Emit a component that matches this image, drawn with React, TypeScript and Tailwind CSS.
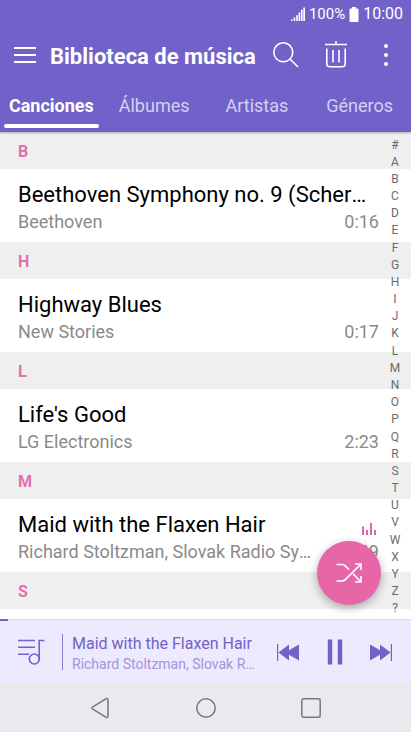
import type { ReactNode } from "react";

type Song = { letter: string; title: string; artist: string; time: string; playing?: boolean };

const songs: Song[] = [
  { letter: "B", title: "Beethoven Symphony no. 9 (Scherzo)", artist: "Beethoven", time: "0:16" },
  { letter: "H", title: "Highway Blues", artist: "New Stories", time: "0:17" },
  { letter: "L", title: "Life's Good", artist: "LG Electronics", time: "2:23" },
  {
    letter: "M",
    title: "Maid with the Flaxen Hair",
    artist: "Richard Stoltzman, Slovak Radio Symphony",
    time: "2:49",
    playing: true,
  },
];

const tabs = ["Canciones", "Álbumes", "Artistas", "Géneros"];
const index = "#ABCDEFGHIJKLMNOPQRSTUVWXYZ?".split("");

function IconButton({ label, className = "", children }: { label: string; className?: string; children: ReactNode }) {
  return (
    <button type="button" aria-label={label} className={`flex shrink-0 items-center justify-center ${className}`}>
      {children}
    </button>
  );
}

function StatusBar() {
  return (
    <div className="flex h-7 items-center justify-end pr-2 text-white">
      <svg width="14" height="14" viewBox="0 0 14 14" fill="currentColor" aria-hidden="true">
        <path d="M0 14v-1.5h1.5V14zM2.6 14v-3.5h1.7V14zM5.2 14V8.2h1.6V14zM7.6 14V5.4h1.6V14zM10 14V2.8h1.6V14zM12.3 14V.4H14V14z" />
      </svg>
      <span className="ml-1 text-[15px] leading-7">100%</span>
      <svg className="ml-1" width="10" height="15" viewBox="0 0 10 15" fill="currentColor" aria-hidden="true">
        <path d="M3 0h4v1.5h1.5q1 0 1 1V14q0 1-1 1h-7q-1 0-1-1V2.5q0-1 1-1H3z" />
      </svg>
      <span className="ml-1 text-base leading-7">10:00</span>
    </div>
  );
}

function Header() {
  return (
    <header className="relative z-10 shrink-0 bg-[#7062c8] shadow-[0_1px_2px_rgba(0,0,0,0.3)]">
      <StatusBar />
      <div className="flex h-14 items-center pl-1 text-white">
        <IconButton label="Menú" className="h-12 w-[42px] pb-0.5">
          <svg width="22" height="16" viewBox="0 0 22 16" stroke="currentColor" strokeWidth="2" aria-hidden="true">
            <path d="M0 1h22M0 8h22M0 15h22" />
          </svg>
        </IconButton>
        <h1 className="ml-1 flex-1 whitespace-nowrap text-[22px] font-bold">Biblioteca de música</h1>
        <IconButton label="Buscar" className="size-[50px] pb-0.5">
          <svg width="26" height="26" viewBox="0 0 26 26" fill="none" stroke="currentColor" strokeWidth="1.6" aria-hidden="true">
            <circle cx="10.3" cy="10.3" r="9.5" />
            <path d="M17 17l8 8" />
          </svg>
        </IconButton>
        <IconButton label="Eliminar" className="size-[50px] pb-0.5">
          <svg width="22" height="28" viewBox="0 0 22 28" fill="none" stroke="currentColor" strokeWidth="1.6" aria-hidden="true">
            <path d="M0 3.5h22M11 0v3.5M1.8 7.5v15.2q0 3 3 3h12.4q3 0 3-3V7.5M8 9v12.5M14 9v12.5" />
          </svg>
        </IconButton>
        <IconButton label="Más opciones" className="size-[50px] pb-0.5">
          <svg width="4" height="22" viewBox="0 0 4 22" fill="currentColor" aria-hidden="true">
            <circle cx="2" cy="2" r="2" />
            <circle cx="2" cy="11" r="2" />
            <circle cx="2" cy="20" r="2" />
          </svg>
        </IconButton>
      </div>
      <nav className="grid h-12 grid-cols-4">
        {tabs.map((tab, i) => (
          <a
            key={tab}
            href={`#${tab}`}
            className={`relative flex justify-center pt-2 text-lg leading-7 ${
              i === 0 ? "font-bold text-white" : "text-[#d6cff6]"
            }`}
          >
            {tab}
            {i === 0 && <span className="absolute inset-x-1 bottom-1 h-1 rounded-full bg-white" />}
          </a>
        ))}
      </nav>
    </header>
  );
}

function SectionLabel({ letter }: { letter: string }) {
  return (
    <h2 className="h-[37px] bg-[#efefef] pl-[18px] pt-px text-base font-bold leading-[37px] text-[#e070ae]">{letter}</h2>
  );
}

function SongRow({ song }: { song: Song }) {
  return (
    <div className="h-[73px] bg-white pl-[18px] pr-8 pt-3">
      <div className="mr-3 truncate text-[22px] leading-7 text-black">{song.title}</div>
      <div className="relative flex justify-between gap-7 text-lg leading-[26px] text-[#8a8a8a]">
        <span className="truncate">{song.artist}</span>
        <span>{song.time}</span>
        {song.playing && (
          <svg className="absolute -top-4 right-0.5" width="16" height="12" viewBox="0 0 16 12" fill="#e266aa" aria-hidden="true">
            <path d="M1 3.5h2V12H1zM5 7h2v5H5zM9 0h2v12H9zM13 7h2v5h-2z" />
          </svg>
        )}
      </div>
    </div>
  );
}

function Player() {
  return (
    <section className="relative z-10 flex h-[65px] shrink-0 items-center border-t border-[#dcd8f4] bg-[#ede9fe] text-[#7062c8]">
      <span className="absolute -top-px left-0 h-0.5 w-2 bg-[#7062c8]" />
      <IconButton label="Lista de reproducción" className="h-16 w-[62px]">
        <svg width="28" height="26" viewBox="0 0 28 26" fill="none" stroke="currentColor" strokeWidth="1.6" aria-hidden="true">
          <path d="M1 1.5h17M1 8.3h17M1 15.2h11M27.5 1.5h-5.3v19" />
          <circle cx="17.3" cy="20" r="5" />
        </svg>
      </IconButton>
      <span className="h-9 w-px bg-[#8b80cf]" />
      <div className="ml-[9px] min-w-0 flex-1 pt-1">
        <div className="truncate text-base leading-5">Maid with the Flaxen Hair</div>
        <div className="truncate text-sm leading-5 text-[#a195dc]">Richard Stoltzman, Slovak Radio Symphony</div>
      </div>
      <IconButton label="Anterior" className="ml-1 h-16 w-[54px]">
        <svg width="22" height="17" viewBox="0 0 22 17" fill="currentColor" aria-hidden="true">
          <path d="M0 0h1.2v17H0zM1.5 8.5L12 .5v5.7L22 .5v16l-10-5.7v5.7z" />
        </svg>
      </IconButton>
      <IconButton label="Pausa" className="h-16 w-10">
        <svg width="16" height="26" viewBox="0 0 16 26" fill="currentColor" aria-hidden="true">
          <path d="M.8.5h4.4v25H.8zM10.8.5h4.4v25h-4.4z" />
        </svg>
      </IconButton>
      <IconButton label="Siguiente" className="mr-1 h-16 w-[52px]">
        <svg width="22" height="17" viewBox="0 0 22 17" fill="currentColor" aria-hidden="true">
          <path d="M20.8 0H22v17h-1.2zM20.5 8.5L10 .5v5.7L0 .5v16l10-5.7v5.7z" />
        </svg>
      </IconButton>
    </section>
  );
}

function SystemNav() {
  return (
    <footer className="flex h-12 shrink-0 items-center justify-center bg-[#e9eaed] text-[#77787b]">
      <IconButton label="Atrás" className="h-12 w-[105px]">
        <svg width="20" height="22" viewBox="0 0 20 22" fill="none" stroke="currentColor" strokeWidth="1.5" strokeLinejoin="round" aria-hidden="true">
          <path d="M14.8 1.8L1.8 9.8q-1.6 1.2 0 2.4l13 8q2.2.9 2.2-1.4V3.2q0-2.3-2.2-1.4z" />
        </svg>
      </IconButton>
      <IconButton label="Inicio" className="h-12 w-[105px]">
        <svg width="20" height="20" viewBox="0 0 20 20" fill="none" stroke="currentColor" strokeWidth="1.5" aria-hidden="true">
          <circle cx="10" cy="10" r="9.2" />
        </svg>
      </IconButton>
      <IconButton label="Recientes" className="h-12 w-[105px]">
        <svg width="20" height="20" viewBox="0 0 20 20" fill="none" stroke="currentColor" strokeWidth="1.5" aria-hidden="true">
          <rect x=".8" y=".8" width="18.4" height="18.4" rx="2" />
        </svg>
      </IconButton>
    </footer>
  );
}

export default function App() {
  return (
    <div className="flex h-screen flex-col overflow-hidden bg-white font-['Roboto','Noto_Sans',sans-serif]">
      <Header />
      <main className="relative min-h-0 flex-1">
        <div className="h-full overflow-hidden">
          {songs.map((song) => (
            <section key={song.letter}>
              <SectionLabel letter={song.letter} />
              <SongRow song={song} />
            </section>
          ))}
          <SectionLabel letter="S" />
        </div>
        <div className="absolute inset-y-0 right-1 flex w-6 flex-col pb-0.5 pt-1 text-xs text-[#6b6b6b]">
          {index.map((letter) => (
            <button key={letter} type="button" className="flex min-h-0 flex-1 items-center justify-center leading-none">
              {letter}
            </button>
          ))}
        </div>
        <button
          type="button"
          aria-label="Aleatorio"
          className="absolute bottom-3.5 right-[30px] flex size-16 items-center justify-center rounded-full bg-[#e766a8] text-white shadow-[0_3px_10px_rgba(0,0,0,0.3)]"
        >
          <svg width="26" height="20" viewBox="0 0 26 20" fill="none" stroke="currentColor" strokeWidth="1.6" aria-hidden="true">
            <path d="M.5 1.5H6q2 0 3.5 1.6l3.5 3.5M.5 18H6q2 0 3.5-1.6L24.5 1.5M17 10.7l7.5 7.8M19 1h6v6M19 19h6v-6" />
          </svg>
        </button>
      </main>
      <Player />
      <SystemNav />
    </div>
  );
}
